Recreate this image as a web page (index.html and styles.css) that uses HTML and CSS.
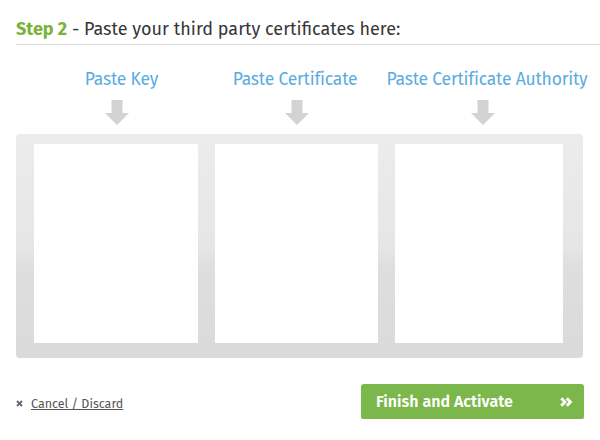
FILE: index.html
```html
<!DOCTYPE html>
<html>
<head>
<meta charset="utf-8">
<link rel="stylesheet" href="styles.css">
</head>
<body>
<div class="page">
  <h2 class="title"><span class="step">Step 2</span> - Paste your third party certificates here:</h2>
  <div class="labels">
    <span class="label">Paste Key</span>
    <span class="label">Paste Certificate</span>
    <span class="label">Paste Certificate Authority</span>
  </div>
  <div class="arrows">
    <svg class="arrow" width="24" height="25" viewBox="0 0 24 25"><path d="M6.5 0h11v13H24L12 25 0 13h6.5z" fill="#d3d3d3"/></svg>
    <svg class="arrow" width="24" height="25" viewBox="0 0 24 25"><path d="M6.5 0h11v13H24L12 25 0 13h6.5z" fill="#d3d3d3"/></svg>
    <svg class="arrow" width="24" height="25" viewBox="0 0 24 25"><path d="M6.5 0h11v13H24L12 25 0 13h6.5z" fill="#d3d3d3"/></svg>
  </div>
  <div class="panel">
    <textarea class="box"></textarea>
    <textarea class="box"></textarea>
    <textarea class="box"></textarea>
  </div>
  <div class="footer">
    <a class="cancel" href="#"><svg class="x" width="7" height="7" viewBox="0 0 7 7"><path d="M1 1l5 5M6 1L1 6" stroke="#666" stroke-width="1.8"/></svg><span class="cancel-text">Cancel / Discard</span></a>
    <button class="finish">Finish and Activate<svg width="13" height="10" viewBox="0 0 13 10"><path d="M1.3 1.2L5 5 1.3 8.8M6.8 1.2L10.5 5 6.8 8.8" fill="none" stroke="#fff" stroke-width="2.8"/></svg></button>
  </div>
</div>
</body>
</html>
```
FILE: styles.css
```css
html, body {
  margin: 0;
  background: #fff;
}
.page {
  width: 584px;
  padding: 18px 0 0 0;
  font-family: "Fira Sans", Lato, "Open Sans", sans-serif;
}
.title {
  margin: 0 -16px 0 16px;
  font-size: 18px;
  letter-spacing: 0;
  font-weight: normal;
  color: #363636;
  line-height: 22px;
  padding: 0 0 4px 0;
  border-bottom: 1px solid #dcdcdc;
}
.step {
  color: #7bb23c;
  font-weight: bold;
}
.labels {
  display: grid;
  grid-template-columns: 175px 172px 212px;
  padding: 25px 0 0 34px;
}
.label {
  color: #5aacdf;
  font-size: 17.5px;
  letter-spacing: -0.2px;
  line-height: 20px;
  white-space: nowrap;
  text-align: center;
}
.arrows {
  display: grid;
  grid-template-columns: 170px 190px 182px;
  padding: 10px 0 0 32px;
  height: 34px;
}
.arrow {
  display: block;
  justify-self: center;
}
.panel {
  margin-left: 16px;
  display: grid;
  grid-template-columns: 164px 163px 168px;
  column-gap: 17px;
  padding: 10px 20px 15px 18px;
  width: 529px;
  height: 199px;
  box-sizing: content-box;
  border-radius: 4px;
  background: linear-gradient(#ececec, #e6e6e6 50%, #dedede 60%, #dadadb);
}
.box {
  margin: 0;
  border: 0;
  padding: 0;
  background: #fff;
  resize: none;
  height: 199px;
  width: 100%;
  box-sizing: border-box;
  outline: none;
}
.footer {
  margin-left: 16px;
  display: flex;
  justify-content: space-between;
  align-items: center;
  margin-top: 26px;
}
.cancel {
  display: flex;
  align-items: center;
  gap: 8px;
  color: #555;
  text-decoration: none;
  font-size: 12.5px;
  padding-top: 3px;
}
.x {
  display: block;
}
.cancel-text {
  text-decoration: underline;
}
.finish {
  width: 223px;
  height: 35px;
  border: 0;
  border-radius: 3px;
  background: #7cb74b;
  box-shadow: 0 1px 1px rgba(0,0,0,0.25);
  color: #fff;
  font-family: "Fira Sans", Lato, "Open Sans", sans-serif;
  font-size: 16px;
  font-weight: 600;
  display: flex;
  align-items: center;
  justify-content: space-between;
  padding: 0 11px 0 15px;
}
```
